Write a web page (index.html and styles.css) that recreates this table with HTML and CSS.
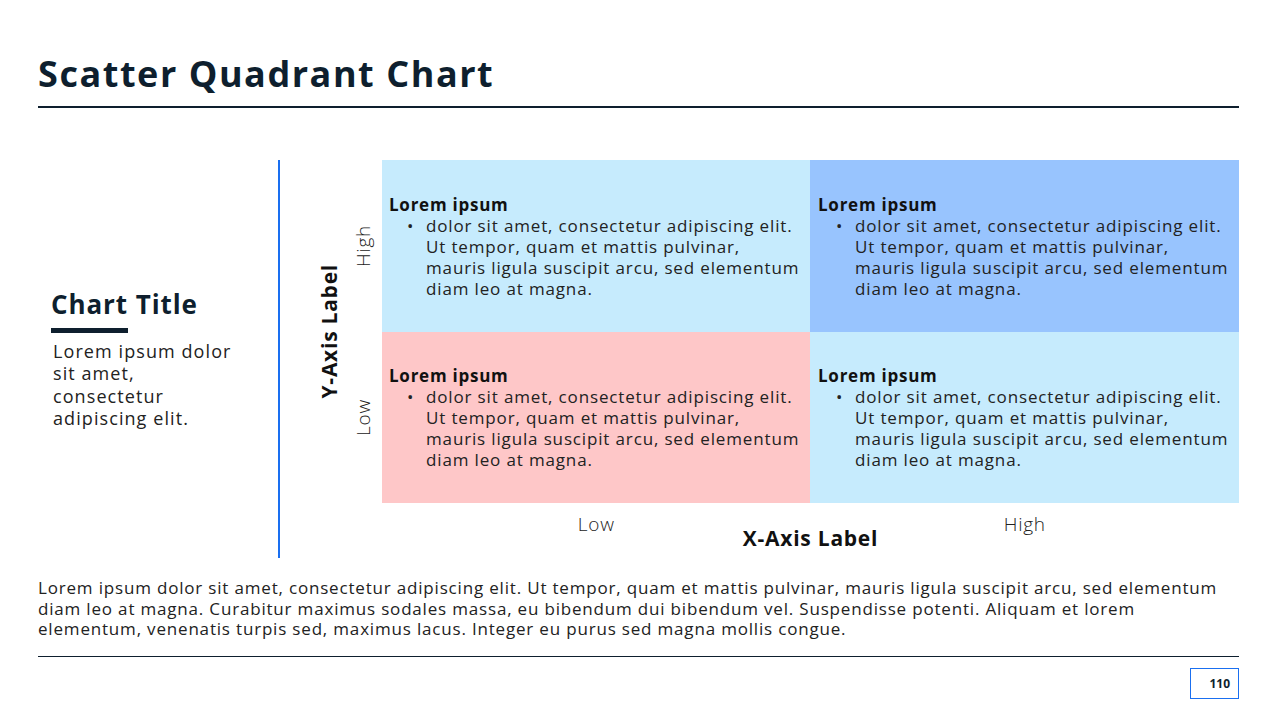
FILE: index.html
```html
<!DOCTYPE html>
<html>
<head>
<meta charset="utf-8">
<link rel="stylesheet" href="styles.css">
</head>
<body>
<div class="slide">
  <header class="head">
    <h1 class="title">Scatter Quadrant Chart</h1>
  </header>
  <main class="main">
    <aside class="side">
      <div class="side-inner">
        <h2 class="chart-title">Chart Title</h2>
        <div class="title-bar"></div>
        <p class="side-text">Lorem ipsum dolor<br>sit amet,<br>consectetur<br>adipiscing elit.</p>
      </div>
    </aside>
    <section class="chart">
      <div class="chart-top">
        <div class="yaxis">
          <div class="ytitle-col"><span class="vtext ytitle">Y-Axis Label</span></div>
          <div class="ylevels">
            <div class="ylevel"><span class="vtext">High</span></div>
            <div class="ylevel"><span class="vtext">Low</span></div>
          </div>
        </div>
        <div class="quads">
          <div class="quad q-light">
            <div class="q-body">
              <div class="q-head">Lorem ipsum</div>
              <div class="q-item"><span class="dot">•</span><span class="q-text">dolor sit amet, consectetur adipiscing elit.<br>Ut tempor, quam et mattis pulvinar,<br>mauris ligula suscipit arcu, sed elementum<br>diam leo at magna.</span></div>
            </div>
          </div>
          <div class="quad q-blue">
            <div class="q-body">
              <div class="q-head">Lorem ipsum</div>
              <div class="q-item"><span class="dot">•</span><span class="q-text">dolor sit amet, consectetur adipiscing elit.<br>Ut tempor, quam et mattis pulvinar,<br>mauris ligula suscipit arcu, sed elementum<br>diam leo at magna.</span></div>
            </div>
          </div>
          <div class="quad q-pink">
            <div class="q-body">
              <div class="q-head">Lorem ipsum</div>
              <div class="q-item"><span class="dot">•</span><span class="q-text">dolor sit amet, consectetur adipiscing elit.<br>Ut tempor, quam et mattis pulvinar,<br>mauris ligula suscipit arcu, sed elementum<br>diam leo at magna.</span></div>
            </div>
          </div>
          <div class="quad q-light">
            <div class="q-body">
              <div class="q-head">Lorem ipsum</div>
              <div class="q-item"><span class="dot">•</span><span class="q-text">dolor sit amet, consectetur adipiscing elit.<br>Ut tempor, quam et mattis pulvinar,<br>mauris ligula suscipit arcu, sed elementum<br>diam leo at magna.</span></div>
            </div>
          </div>
        </div>
      </div>
      <div class="xaxis">
        <div class="xlevels">
          <span class="xlevel">Low</span>
          <span class="xlevel">High</span>
        </div>
        <div class="xtitle">X-Axis Label</div>
      </div>
    </section>
  </main>
  <p class="footer-text">Lorem ipsum dolor sit amet, consectetur adipiscing elit. Ut tempor, quam et mattis pulvinar, mauris ligula suscipit arcu, sed elementum<br>diam leo at magna. Curabitur maximus sodales massa, eu bibendum dui bibendum vel. Suspendisse potenti. Aliquam et lorem<br>elementum, venenatis turpis sed, maximus lacus. Integer eu purus sed magna mollis congue.</p>
  <footer class="foot">
    <div class="page-num">110</div>
  </footer>
</div>
</body>
</html>
```

FILE: styles.css
```css
* { box-sizing: border-box; }
html, body { margin: 0; padding: 0; background: #ffffff; }
body {
  font-family: "Open Sans", "Liberation Sans", sans-serif;
  color: #222222;
  letter-spacing: 0.047em;
}

.slide {
  width: 1280px;
  height: 720px;
  padding: 0 41px 0 38px;
  overflow: hidden;
}

.head {
  padding-top: 52px;
  border-bottom: 2px solid #0e1f2e;
  height: 108px;
}
.title {
  margin: 0;
  font-size: 36px;
  line-height: 44px;
  font-weight: 700;
  letter-spacing: 0.043em;
  color: #0e1f2e;
}

.main {
  margin-top: 52px;
  height: 398px;
  display: flex;
}

.side {
  width: 242px;
  border-right: 2px solid #1a6ff0;
  display: flex;
  align-items: center;
  padding-left: 13px;
}
.chart-title {
  margin: 0;
  font-size: 26px;
  line-height: 30px;
  font-weight: 700;
  letter-spacing: 0.035em;
  color: #0e1f2e;
}
.title-bar {
  width: 77px;
  height: 5px;
  background: #0e1f2e;
  margin-top: 9px;
}
.side-text {
  margin: 7px 0 0 2px;
  font-size: 18px;
  line-height: 22.3px;
  letter-spacing: 0.06em;
  color: #222222;
}

.chart {
  flex: 1;
  display: flex;
  flex-direction: column;
}
.chart-top {
  display: flex;
  height: 343px;
}
.yaxis {
  width: 102px;
  display: flex;
  padding-left: 37px;
}
.vtext {
  writing-mode: vertical-rl;
  transform: rotate(180deg);
  white-space: nowrap;
}
.ytitle-col {
  width: 24px;
  display: flex;
  align-items: center;
  justify-content: center;
}
.ytitle {
  font-size: 21px;
  font-weight: 700;
  color: #111111;
}
.ylevels {
  flex: 1;
  display: flex;
  flex-direction: column;
  padding-left: 2px;
}
.ylevel {
  flex: 1;
  display: flex;
  align-items: center;
  justify-content: center;
  font-size: 19px;
  font-weight: 300;
  color: #222222;
}

.quads {
  flex: 1;
  display: grid;
  grid-template-columns: 428px 1fr;
  grid-template-rows: 1fr 1fr;
}
.quad {
  display: flex;
  align-items: center;
  padding-left: 7px;
}
.quad:nth-child(even) { padding-left: 8px; }
.q-light { background: #c6ebfd; }
.q-blue { background: #98c4fe; }
.q-pink { background: #fec7c8; }
.q-body { padding-top: 2px; }
.q-head {
  font-size: 17px;
  line-height: 20px;
  font-weight: 700;
  color: #111111;
}
.q-item {
  display: flex;
  font-size: 17px;
  line-height: 21px;
  letter-spacing: 0.05em;
  color: #222222;
}
.dot {
  width: 37px;
  padding-left: 18px;
  flex: none;
}
.q-text { white-space: nowrap; }

.xaxis {
  padding-left: 102px;
  padding-top: 10px;
}
.xlevels {
  display: grid;
  grid-template-columns: 1fr 1fr;
  text-align: center;
  font-size: 19px;
  line-height: 22px;
  font-weight: 300;
  color: #222222;
}
.xtitle {
  margin-top: -10px;
  text-align: center;
  font-size: 21px;
  line-height: 26px;
  font-weight: 700;
  color: #111111;
}

.footer-text {
  margin: 20px 0 0 0;
  font-size: 17px;
  line-height: 20.7px;
  letter-spacing: 0.048em;
  color: #222222;
  white-space: nowrap;
  height: 79px;
  border-bottom: 1px solid #0e1f2e;
}
.foot {
  display: flex;
  justify-content: flex-end;
  padding-top: 11px;
}
.page-num {
  width: 49px;
  height: 31px;
  border: 1px solid #1a6ff0;
  font-size: 12px;
  font-weight: 700;
  letter-spacing: 0;
  color: #0e1f2e;
  text-align: right;
  padding-right: 8px;
  line-height: 29px;
}
```
